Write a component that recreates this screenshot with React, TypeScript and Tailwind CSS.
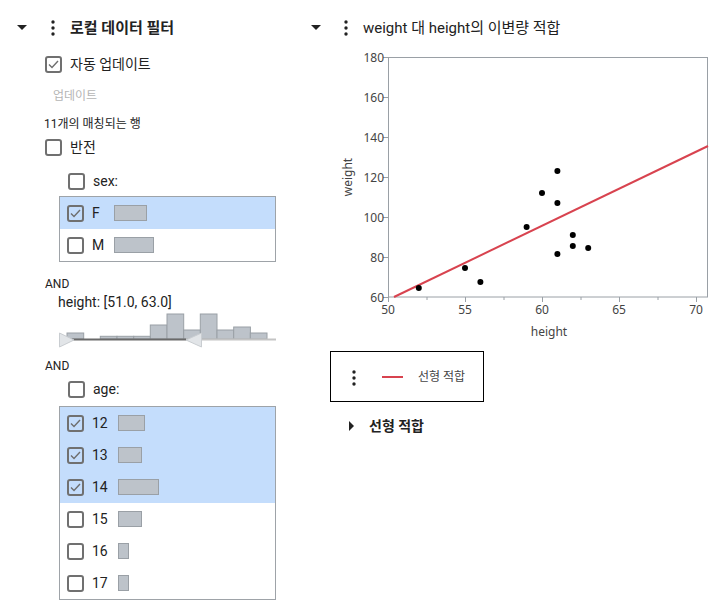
import React from 'react'

const font = { fontFamily: 'Roboto, "Noto Sans CJK KR", sans-serif' }

function Caret({ open = true }: { open?: boolean }) {
  return open ? (
    <svg width="10" height="6" viewBox="0 0 10 6">
      <path d="M0 0 L10 0 L5 5 Z" fill="#222" />
    </svg>
  ) : (
    <svg width="6" height="10" viewBox="0 0 6 10">
      <path d="M0 0 L5 5 L0 10 Z" fill="#222" />
    </svg>
  )
}

function Dots() {
  return (
    <svg width="4" height="16" viewBox="0 0 4 16">
      <circle cx="2" cy="2" r="1.7" fill="#222" />
      <circle cx="2" cy="8" r="1.7" fill="#222" />
      <circle cx="2" cy="14" r="1.7" fill="#222" />
    </svg>
  )
}

function Check({ checked }: { checked: boolean }) {
  return (
    <div className="flex h-[17px] w-[17px] shrink-0 items-center justify-center rounded-[3px] border-2 border-[#707070]">
      {checked && (
        <svg width="11" height="9" viewBox="0 0 11 9">
          <path d="M1 4.5 L4 7.5 L10 1" fill="none" stroke="#6e6e6e" strokeWidth="1.4" />
        </svg>
      )}
    </div>
  )
}

type Level = { label: string; bar: number; on: boolean }

const sexLevels: Level[] = [
  { label: 'F', bar: 33, on: true },
  { label: 'M', bar: 40, on: false },
]

const ageLevels: Level[] = [
  { label: '12', bar: 27, on: true },
  { label: '13', bar: 24, on: true },
  { label: '14', bar: 41, on: true },
  { label: '15', bar: 24, on: false },
  { label: '16', bar: 11, on: false },
  { label: '17', bar: 11, on: false },
]

function LevelList({ levels, labelWidth }: { levels: Level[]; labelWidth: string }) {
  return (
    <div className="ml-[59px] w-[217px] border border-[#9ea3a8]">
      {levels.map(l => (
        <div
          key={l.label}
          className={`flex h-[32px] items-center pl-[7px] ${l.on ? 'bg-[#c4ddfc]' : 'bg-white'}`}
        >
          <Check checked={l.on} />
          <span className={`ml-[8px] text-[14px] text-[#222] ${labelWidth}`}>{l.label}</span>
          <div className="h-[16px] border border-[#9aa0a6] bg-[#bdc3ca]" style={{ width: l.bar }} />
        </div>
      ))}
    </div>
  )
}

const histo = [
  { x: 67, top: 333 },
  { x: 100.3, top: 336.3 },
  { x: 117, top: 336.3 },
  { x: 133.7, top: 336.3 },
  { x: 150.3, top: 325 },
  { x: 167, top: 314 },
  { x: 183.7, top: 330 },
  { x: 200.3, top: 314 },
  { x: 217, top: 330 },
  { x: 233.7, top: 327 },
  { x: 250.3, top: 333 },
]

function Histogram() {
  return (
    <svg className="ml-[55px]" width="225" height="40" viewBox="55 310 225 40">
      {histo.map(b => (
        <rect
          key={b.x}
          x={b.x}
          y={b.top}
          width={16.7}
          height={339 - b.top}
          fill="#bdc3ca"
          stroke="#9aa0a6"
          strokeWidth="1"
        />
      ))}
      <line x1="67" y1="339.5" x2="186" y2="339.5" stroke="#6a6a6a" strokeWidth="2" />
      <line x1="186" y1="339.5" x2="276" y2="339.5" stroke="#c4c4c4" strokeWidth="2" />
      <path d="M59.5 333 L74 340 L59.5 347 Z" fill="#e2e5e8" stroke="#c9cdd1" />
      <path d="M201.5 333 L186 340 L201.5 347 Z" fill="#e2e5e8" stroke="#c9cdd1" />
    </svg>
  )
}

const points: [number, number][] = [
  [52, 64.5], [55, 74.5], [56, 67.5], [59, 95], [60, 112], [61, 123],
  [61, 107], [61, 81.5], [62, 91], [62, 85.5], [63, 84.5],
]

const px = (h: number) => 388 + (h - 50) * 15.4
const py = (w: number) => 297 - (w - 60) * 2

function Plot() {
  const yTicks = [60, 80, 100, 120, 140, 160, 180]
  const xTicks = [50, 55, 60, 65, 70]
  const minor = [52.5, 57.5, 62.5, 67.5]
  return (
    <svg
      className="ml-[30px] mt-[5px]"
      width="390"
      height="300"
      viewBox="330 45 390 300"
      style={{ fontFamily: '"Noto Sans", "Open Sans", sans-serif' }}
    >
      <rect x="388.5" y="57.5" width="319" height="239.5" fill="white" stroke="#9aa0a6" />
      {yTicks.map(t => (
        <g key={t}>
          <line x1="383" y1={py(t) + 0.5} x2="388" y2={py(t) + 0.5} stroke="#9aa0a6" />
          <text x="384" y={py(t) + 4.5} fontSize="12" fill="#444" textAnchor="end">
            {t}
          </text>
        </g>
      ))}
      {xTicks.map(t => (
        <g key={t}>
          <line x1={px(t) + 0.5} y1="297" x2={px(t) + 0.5} y2="302" stroke="#9aa0a6" />
          <text x={px(t)} y="314" fontSize="12" fill="#444" textAnchor="middle">
            {t}
          </text>
        </g>
      ))}
      {minor.map(t => (
        <line key={t} x1={px(t) + 0.5} y1="297" x2={px(t) + 0.5} y2="300" stroke="#9aa0a6" />
      ))}
      <text x="549" y="336" fontSize="12" fill="#444" textAnchor="middle">
        height
      </text>
      <text
        x="0"
        y="0"
        fontSize="12"
        fill="#444"
        textAnchor="middle"
        transform="translate(352 177) rotate(-90)"
      >
        weight
      </text>
      <line x1="394" y1="297" x2="708" y2="146" stroke="#d8434f" strokeWidth="2" />
      {points.map(([h, w], i) => (
        <circle key={i} cx={px(h)} cy={py(w)} r="3" fill="#000" />
      ))}
    </svg>
  )
}

function FilterPanel() {
  return (
    <div className="flex w-[300px] shrink-0 flex-col text-[#222]">
      <div className="mt-[16px] flex h-[24px] items-center">
        <div className="ml-[17px] flex items-center">
          <Caret />
        </div>
        <div className="ml-[24px] flex items-center">
          <Dots />
        </div>
        <span className="ml-[15px] text-[15px] font-semibold">로컬 데이터 필터</span>
      </div>

      <div className="mt-[12px] flex h-[24px] items-center pl-[45px]">
        <Check checked />
        <span className="ml-[8px] text-[14px]">자동 업데이트</span>
      </div>

      <div className="mt-[10px] flex h-[20px] items-center pl-[53px] text-[12px] text-[#b5b5b5]">
        업데이트
      </div>

      <div className="mt-[9px] flex h-[18px] items-center pl-[44px] text-[12px]">
        11개의 매칭되는 행
      </div>

      <div className="mt-[2px] flex h-[24px] items-center pl-[45px]">
        <Check checked={false} />
        <span className="ml-[8px] text-[14px]">반전</span>
      </div>

      <div className="mt-[10px] flex h-[24px] items-center pl-[68px]">
        <Check checked={false} />
        <span className="ml-[8px] text-[14px]">sex:</span>
      </div>

      <div className="mt-[3px]">
        <LevelList levels={sexLevels} labelWidth="w-[22px]" />
      </div>

      <div className="mt-[14px] flex h-[16px] items-center pl-[45px] text-[12px]">AND</div>
      <div className="mt-[2px] flex h-[16px] items-center pl-[58px] text-[14px]">
        height: [51.0, 63.0]
      </div>
      <Histogram />

      <div className="mt-[8px] flex h-[16px] items-center pl-[45px] text-[12px]">AND</div>
      <div className="mt-[3px] flex h-[24px] items-center pl-[68px]">
        <Check checked={false} />
        <span className="ml-[8px] text-[14px]">age:</span>
      </div>

      <div className="mt-[5px]">
        <LevelList levels={ageLevels} labelWidth="w-[26px]" />
      </div>
    </div>
  )
}

function BivariatePanel() {
  return (
    <div className="flex flex-col text-[#222]">
      <div className="mt-[16px] flex h-[24px] items-center">
        <div className="ml-[11px] flex items-center">
          <Caret />
        </div>
        <div className="ml-[23px] flex items-center">
          <Dots />
        </div>
        <span className="ml-[15px] text-[15px]">weight 대 height의 이변량 적합</span>
      </div>

      <Plot />

      <div className="ml-[30px] mt-[6px] flex h-[51px] w-[154px] items-center border border-black">
        <div className="ml-[21px] mt-[2px] flex items-center">
          <Dots />
        </div>
        <div className="ml-[26px] h-[2px] w-[21px] bg-[#d8434f]" />
        <span className="ml-[15px] text-[12px] text-[#444]">선형 적합</span>
      </div>

      <div className="mt-[12px] flex h-[24px] items-center">
        <div className="ml-[49px] flex items-center">
          <Caret open={false} />
        </div>
        <span className="ml-[14px] text-[14px] font-semibold">선형 적합</span>
      </div>
    </div>
  )
}

export default function App() {
  return (
    <div className="flex h-[611px] w-[723px] overflow-hidden bg-white" style={font}>
      <FilterPanel />
      <BivariatePanel />
    </div>
  )
}
